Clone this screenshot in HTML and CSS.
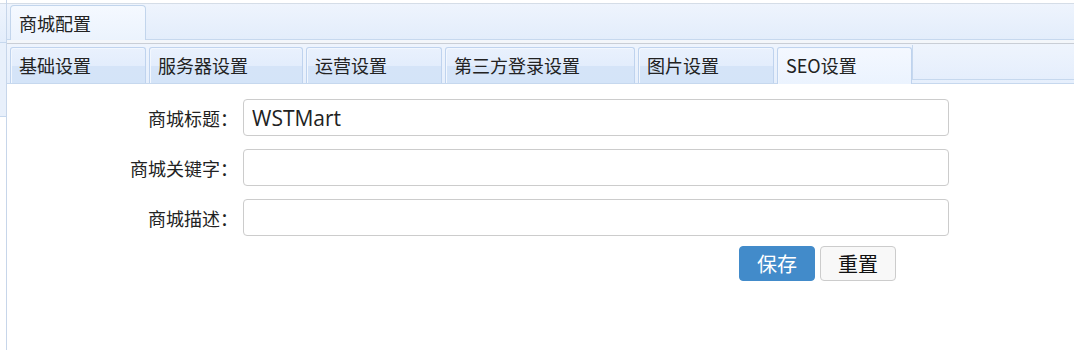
FILE: index.html
```html
<!DOCTYPE html>
<html lang="zh-CN">
<head>
<meta charset="utf-8">
<title>商城配置</title>
<link rel="stylesheet" href="styles.css">
</head>
<body>
<div class="layout">
  <div class="side">
    <div class="side-head"></div>
    <div class="side-body"></div>
  </div>
  <div class="main">
    <div class="outer-header">
      <div class="outer-tab">商城配置</div>
    </div>
    <div class="outer-gap"></div>
    <div class="inner-header">
      <div class="inner-tab">基础设置</div>
      <div class="inner-tab">服务器设置</div>
      <div class="inner-tab">运营设置</div>
      <div class="inner-tab">第三方登录设置</div>
      <div class="inner-tab">图片设置</div>
      <div class="inner-tab active">SEO设置</div>
      <div class="inner-rest"></div>
    </div>
    <form class="form">
      <label class="label" for="t">商城标题：</label>
      <input class="field" id="t" type="text" value="WSTMart">
      <label class="label" for="k">商城关键字：</label>
      <input class="field" id="k" type="text" value="">
      <label class="label" for="d">商城描述：</label>
      <input class="field" id="d" type="text" value="">
      <div class="actions">
        <button type="button" class="btn btn-primary">保存</button>
        <button type="reset" class="btn btn-default">重置</button>
      </div>
    </form>
  </div>
</div>
</body>
</html>
```

FILE: styles.css
```css
* { box-sizing: border-box; }
html, body { margin: 0; padding: 0; background: #fff; }
body {
  font-family: "Noto Sans CJK SC", "Noto Sans", sans-serif;
  color: #222;
  width: 1074px;
  height: 350px;
  overflow: hidden;
}
.layout { display: flex; height: 350px; }
.side {
  width: 7px;
  border-right: 1px solid #c7d6ea;
  display: flex;
  flex-direction: column;
}
.side-head {
  height: 40px;
  background: linear-gradient(#eef4fd, #e3edfb);
  border-top: 1px solid #d5dde7;
  margin-top: 3px;
  border-bottom: 1px solid #c6d8ee;
}
.side-body {
  height: 74px;
  background: #e8f0fb;
  border-bottom: 1px solid #c6d8ee;
}
.main { flex: 1; display: flex; flex-direction: column; }
.outer-header {
  margin-top: 3px;
  height: 37px;
  border-top: 1px solid #d5dde7;
  border-bottom: 1px solid #c6d8ee;
  background: linear-gradient(#eef4fd, #e3edfb);
  display: flex;
  align-items: flex-end;
  padding-left: 3px;
}
.outer-tab {
  width: 136px;
  height: 35px;
  margin-bottom: -1px;
  border: 1px solid #c2d5ec;
  border-bottom: none;
  border-radius: 4px 4px 0 0;
  background: linear-gradient(#f5f9ff, #ebf3fd);
  font-size: 18px;
  line-height: 34px;
  padding-left: 8px;
  color: #222;
}
.outer-gap {
  height: 4px;
  background: #f3f6fa;
  border-bottom: 1px solid #c9ced6;
}
.inner-header {
  height: 40px;
  border-bottom: 1px solid #c6d8ee;
  background: linear-gradient(#eef4fd, #e6effc);
  display: flex;
  align-items: flex-end;
  padding-left: 3px;
  gap: 3px;
}
.inner-tab {
  height: 36px;
  border: 1px solid #bfd3ee;
  border-bottom: none;
  border-radius: 3px 3px 0 0;
  box-shadow: inset 1px 1px 0 #f2f7fe;
  background: linear-gradient(#e9f1fd 0%, #e3edfc 50%, #d5e4f8 52%, #d4e4f8 100%);
  font-size: 18px;
  line-height: 35px;
  padding: 0 54px 0 8px;
  white-space: nowrap;
  color: #222;
}
.inner-tab.active {
  background: linear-gradient(#f4f8ff, #ebf3fe);
  height: 37px;
  margin-bottom: -1px;
}
.inner-rest {
  flex: 1;
  height: 35px;
  margin-bottom: 3px;
  border-left: 1px solid #c6d8ee;
  border-bottom: 1px solid #c6d8ee;
  margin-left: -3px;
  background: linear-gradient(#eef4fd, #e5eefc);
}
.form {
  display: grid;
  grid-template-columns: 231px 706px;
  column-gap: 5px;
  row-gap: 13px;
  padding-top: 15px;
  align-items: center;
}
.label {
  font-size: 18px;
  text-align: right;
  color: #222;
  white-space: nowrap;
  padding-top: 1px;
}
.field {
  height: 37px;
  border: 1px solid #cccccc;
  border-radius: 4px;
  padding: 0 8px;
  font-family: "Open Sans", "Noto Sans", sans-serif;
  font-size: 21px;
  color: #222;
  background: #fff;
  outline: none;
}
.actions {
  grid-column: 2;
  display: flex;
  gap: 5px;
  padding-left: 496px;
  margin-top: -3px;
}
.btn {
  width: 76px;
  height: 35px;
  border-radius: 4px;
  font-family: "Noto Sans CJK SC", sans-serif;
  font-size: 20px;
  line-height: 1;
  padding: 0;
}
.btn-primary {
  background: #428bca;
  border: 1px solid #428bca;
  color: #fff;
}
.btn-default {
  background: #f8f8f8;
  border: 1px solid #cccccc;
  color: #111;
}
```
